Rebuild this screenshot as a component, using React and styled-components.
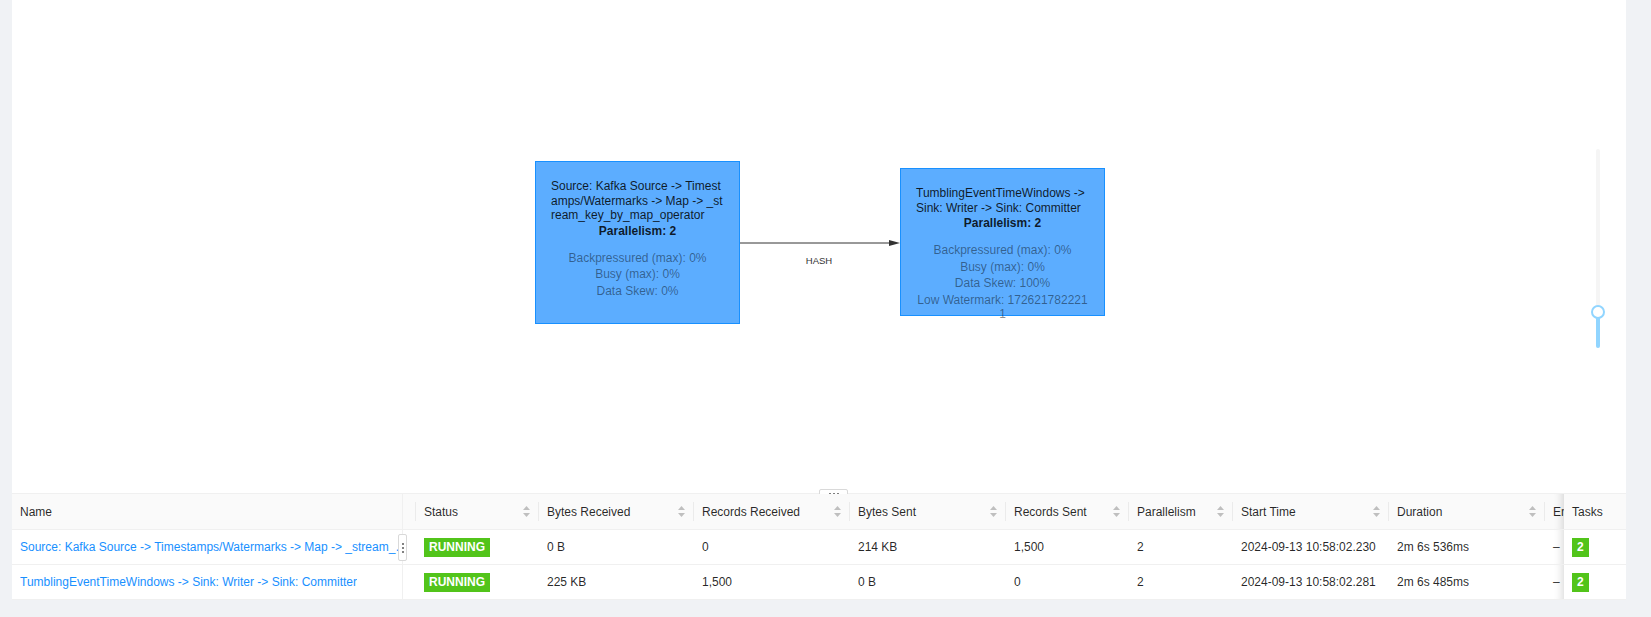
import React from 'react';
import styled, { createGlobalStyle } from 'styled-components';

const GlobalStyle = createGlobalStyle`
  html, body {
    margin: 0;
    padding: 0;
    background: #f0f2f5;
  }
  body {
    font-family: "Liberation Sans", Arial, sans-serif;
    font-size: 12px;
    color: rgba(0, 0, 0, 0.85);
  }
  * { box-sizing: border-box; }
`;

const vertices = [
  {
    id: 'source',
    x: 523,
    y: 161,
    h: 163,
    title: 'Source: Kafka Source -> Timestamps/Watermarks -> Map -> _stream_key_by_map_operator',
    parallelism: 2,
    metrics: ['Backpressured (max): 0%', 'Busy (max): 0%', 'Data Skew: 0%'],
  },
  {
    id: 'window',
    x: 888,
    y: 168,
    h: 148,
    title: 'TumblingEventTimeWindows -> Sink: Writer -> Sink: Committer',
    parallelism: 2,
    metrics: ['Backpressured (max): 0%', 'Busy (max): 0%', 'Data Skew: 100%', 'Low Watermark: 1726217822211'],
  },
];

const columns = [
  { key: 'name', title: 'Name' },
  { key: 'status', title: 'Status', sort: true },
  { key: 'bytesIn', title: 'Bytes Received', sort: true },
  { key: 'recordsIn', title: 'Records Received', sort: true },
  { key: 'bytesOut', title: 'Bytes Sent', sort: true },
  { key: 'recordsOut', title: 'Records Sent', sort: true },
  { key: 'parallelism', title: 'Parallelism', sort: true },
  { key: 'start', title: 'Start Time', sort: true },
  { key: 'duration', title: 'Duration', sort: true },
  { key: 'end', title: 'End Time', sort: true },
  { key: 'tasks', title: 'Tasks' },
];

const rows = [
  {
    name: 'Source: Kafka Source -> Timestamps/Watermarks -> Map -> _stream_key_by_map_operator',
    status: 'RUNNING',
    bytesIn: '0 B',
    recordsIn: '0',
    bytesOut: '214 KB',
    recordsOut: '1,500',
    parallelism: '2',
    start: '2024-09-13 10:58:02.230',
    duration: '2m 6s 536ms',
    end: '–',
    tasks: 2,
  },
  {
    name: 'TumblingEventTimeWindows -> Sink: Writer -> Sink: Committer',
    status: 'RUNNING',
    bytesIn: '225 KB',
    recordsIn: '1,500',
    bytesOut: '0 B',
    recordsOut: '0',
    parallelism: '2',
    start: '2024-09-13 10:58:02.281',
    duration: '2m 6s 485ms',
    end: '–',
    tasks: 2,
  },
];

const Page = styled.div`
  padding: 0 25px 17px 12px;
`;

const Panel = styled.div`
  position: relative;
  width: 1614px;
  background: #fff;
`;

const Canvas = styled.div`
  position: relative;
  height: 494px;
  border-bottom: 1px solid #f0f0f0;
  overflow: hidden;
`;

const EdgeLayer = styled.svg`
  position: absolute;
  inset: 0;
  width: 100%;
  height: 100%;
  pointer-events: none;
`;

const NodeBox = styled.div`
  position: absolute;
  left: ${(p) => p.$x}px;
  top: ${(p) => p.$y}px;
  width: 205px;
  height: ${(p) => p.$h}px;
  padding: 17px 15px 0;
  background: #5cadff;
  border: 1px solid #1890ff;
  font-size: 12px;
  word-break: break-all;
`;

const NodeTitle = styled.div`
  line-height: 14.5px;
  color: rgba(0, 0, 0, 0.85);
`;

const NodeParallel = styled.div`
  line-height: 15px;
  margin-top: 1px;
  font-weight: bold;
  text-align: center;
  color: rgba(0, 0, 0, 0.85);
`;

const NodeMetrics = styled.div`
  margin-top: 12px;
  text-align: center;
  color: rgba(0, 0, 0, 0.45);
`;

const Metric = styled.div`
  line-height: 14.5px;
  margin-top: 2px;
`;

const ZoomRail = styled.div`
  position: absolute;
  left: 1584px;
  top: 149px;
  width: 4px;
  height: 199px;
  border-radius: 2px;
  background: #f5f5f5;
`;

const ZoomTrack = styled.div`
  position: absolute;
  left: 0;
  bottom: 0;
  width: 4px;
  height: ${(p) => p.$h}px;
  border-radius: 2px;
  background: #91d5ff;
`;

const ZoomHandle = styled.div`
  position: absolute;
  left: -5px;
  bottom: ${(p) => p.$h - 7}px;
  width: 14px;
  height: 14px;
  border-radius: 50%;
  border: 2px solid #91d5ff;
  background: #fff;
`;

const SplitGrip = styled.div`
  position: absolute;
  left: 807px;
  top: 489px;
  width: 29px;
  height: 10px;
  border: 1px solid #d9d9d9;
  border-radius: 2px;
  background: #fff;
  display: flex;
  align-items: center;
  justify-content: center;
  gap: 2px;

  i {
    display: block;
    width: 2px;
    height: 2px;
    border-radius: 50%;
    background: #555;
  }
`;

const Table = styled.div`
  display: grid;
  grid-template-columns: 404px 123px 155px 156px 156px 123px 104px 156px 156px 19px 62px;
  font-size: 12px;
`;

const HeadCell = styled.div`
  position: relative;
  height: 36px;
  padding: 0 9px 0 8px;
  display: flex;
  align-items: center;
  justify-content: space-between;
  background: #fafafa;
  border-bottom: 1px solid #f0f0f0;
  color: rgba(0, 0, 0, 0.85);
  white-space: nowrap;
  overflow: ${(p) => (p.$fixed ? 'visible' : 'hidden')};

  &::before {
    content: '';
    display: ${(p) => (p.$sep ? 'block' : 'none')};
    position: absolute;
    right: 0;
    top: 8px;
    width: 1px;
    height: 19px;
    background: rgba(0, 0, 0, 0.06);
  }
`;

const BodyCell = styled.div`
  position: relative;
  height: 35px;
  padding: 0 8px;
  display: flex;
  align-items: center;
  background: #fff;
  border-bottom: 1px solid #f0f0f0;
  color: rgba(0, 0, 0, 0.85);
  white-space: nowrap;
  overflow: ${(p) => (p.$fixed ? 'visible' : 'hidden')};
`;

const NameHead = styled(HeadCell)`
  &::after {
    content: '';
    position: absolute;
    left: 390px;
    top: 0;
    bottom: 0;
    width: 1px;
    background: #f0f0f0;
  }
`;

const NameCell = styled(BodyCell)`
  &::after {
    content: '';
    position: absolute;
    left: 390px;
    top: 0;
    bottom: 0;
    width: 1px;
    background: #f0f0f0;
  }
`;

const FixedRight = styled.div`
  position: relative;
  height: 100%;
  display: flex;
  align-items: center;

  &::after {
    content: '';
    position: absolute;
    left: -18px;
    top: 0;
    bottom: 0;
    width: 10px;
    box-shadow: inset -10px 0 8px -8px rgba(0, 0, 0, 0.15);
  }
`;

const NameLink = styled.a`
  display: block;
  max-width: 390px;
  overflow: hidden;
  text-overflow: ellipsis;
  white-space: nowrap;
  color: #1890ff;
  text-decoration: none;
`;

const ResizeGrip = styled.div`
  position: absolute;
  left: 386px;
  top: 4px;
  width: 9px;
  height: 27px;
  z-index: 1;
  border: 1px solid #d9d9d9;
  border-radius: 2px;
  background: #fff;
  display: flex;
  flex-direction: column;
  align-items: center;
  justify-content: center;
  gap: 2px;

  i {
    display: block;
    width: 2px;
    height: 2px;
    border-radius: 50%;
    background: #595959;
  }
`;

const Tag = styled.span`
  display: inline-block;
  height: 19px;
  line-height: 19px;
  padding: 0 5px;
  background: #52c41a;
  color: #fff;
  font-weight: bold;
  font-size: 12px;
`;

const SortSvg = styled.svg`
  flex: none;
  fill: #bfbfbf;
`;

const SortIcon = () => (
  <SortSvg viewBox="0 0 7 11" width="7" height="11">
    <path d="M3.5 0 L7 4 L0 4 Z" />
    <path d="M0 7 L7 7 L3.5 11 Z" />
  </SortSvg>
);

const GraphNode = ({ node }) => (
  <NodeBox $x={node.x} $y={node.y} $h={node.h}>
    <NodeTitle>{node.title}</NodeTitle>
    <NodeParallel>Parallelism: {node.parallelism}</NodeParallel>
    <NodeMetrics>
      {node.metrics.map((m) => (
        <Metric key={m}>{m}</Metric>
      ))}
    </NodeMetrics>
  </NodeBox>
);

const renderCell = (col, row, i) => {
  if (col.key === 'name') {
    return (
      <NameCell key={col.key}>
        <NameLink href="#">{row.name}</NameLink>
        {i === 0 && (
          <ResizeGrip>
            <i />
            <i />
            <i />
          </ResizeGrip>
        )}
      </NameCell>
    );
  }
  if (col.key === 'status') {
    return (
      <BodyCell key={col.key}>
        <Tag>{row.status}</Tag>
      </BodyCell>
    );
  }
  if (col.key === 'tasks') {
    return (
      <BodyCell key={col.key} $fixed>
        <FixedRight>
          <Tag>{row.tasks}</Tag>
        </FixedRight>
      </BodyCell>
    );
  }
  return <BodyCell key={col.key}>{row[col.key]}</BodyCell>;
};

const App = () => {
  const zoomLevel = 36;

  return (
    <Page>
      <GlobalStyle />
      <Panel>
        <Canvas>
          <EdgeLayer>
            <line x1="728" y1="243" x2="878" y2="243" stroke="#333" strokeWidth="1" />
            <path d="M877 240 L888 243 L877 246 Z" fill="#333" />
            <text
              x="807"
              y="263.5"
              textAnchor="middle"
              fontSize="9.5"
              fontFamily='"Liberation Sans", Arial, sans-serif'
              fill="#333"
            >
              HASH
            </text>
          </EdgeLayer>
          {vertices.map((v) => (
            <GraphNode key={v.id} node={v} />
          ))}
          <ZoomRail>
            <ZoomTrack $h={zoomLevel} />
            <ZoomHandle $h={zoomLevel} />
          </ZoomRail>
        </Canvas>
        <SplitGrip>
          <i />
          <i />
          <i />
        </SplitGrip>
        <Table>
          {columns.map((col, idx) => {
            if (col.key === 'name') return <NameHead key={col.key} $sep>{col.title}</NameHead>;
            if (col.key === 'tasks')
              return (
                <HeadCell key={col.key} $fixed>
                  <FixedRight>{col.title}</FixedRight>
                </HeadCell>
              );
            return (
              <HeadCell key={col.key} $sep={idx < columns.length - 2}>
                <span>{col.title}</span>
                {col.sort && <SortIcon />}
              </HeadCell>
            );
          })}
          {rows.map((row, i) => columns.map((col) => renderCell(col, row, i)))}
        </Table>
      </Panel>
    </Page>
  );
};

export default App;
